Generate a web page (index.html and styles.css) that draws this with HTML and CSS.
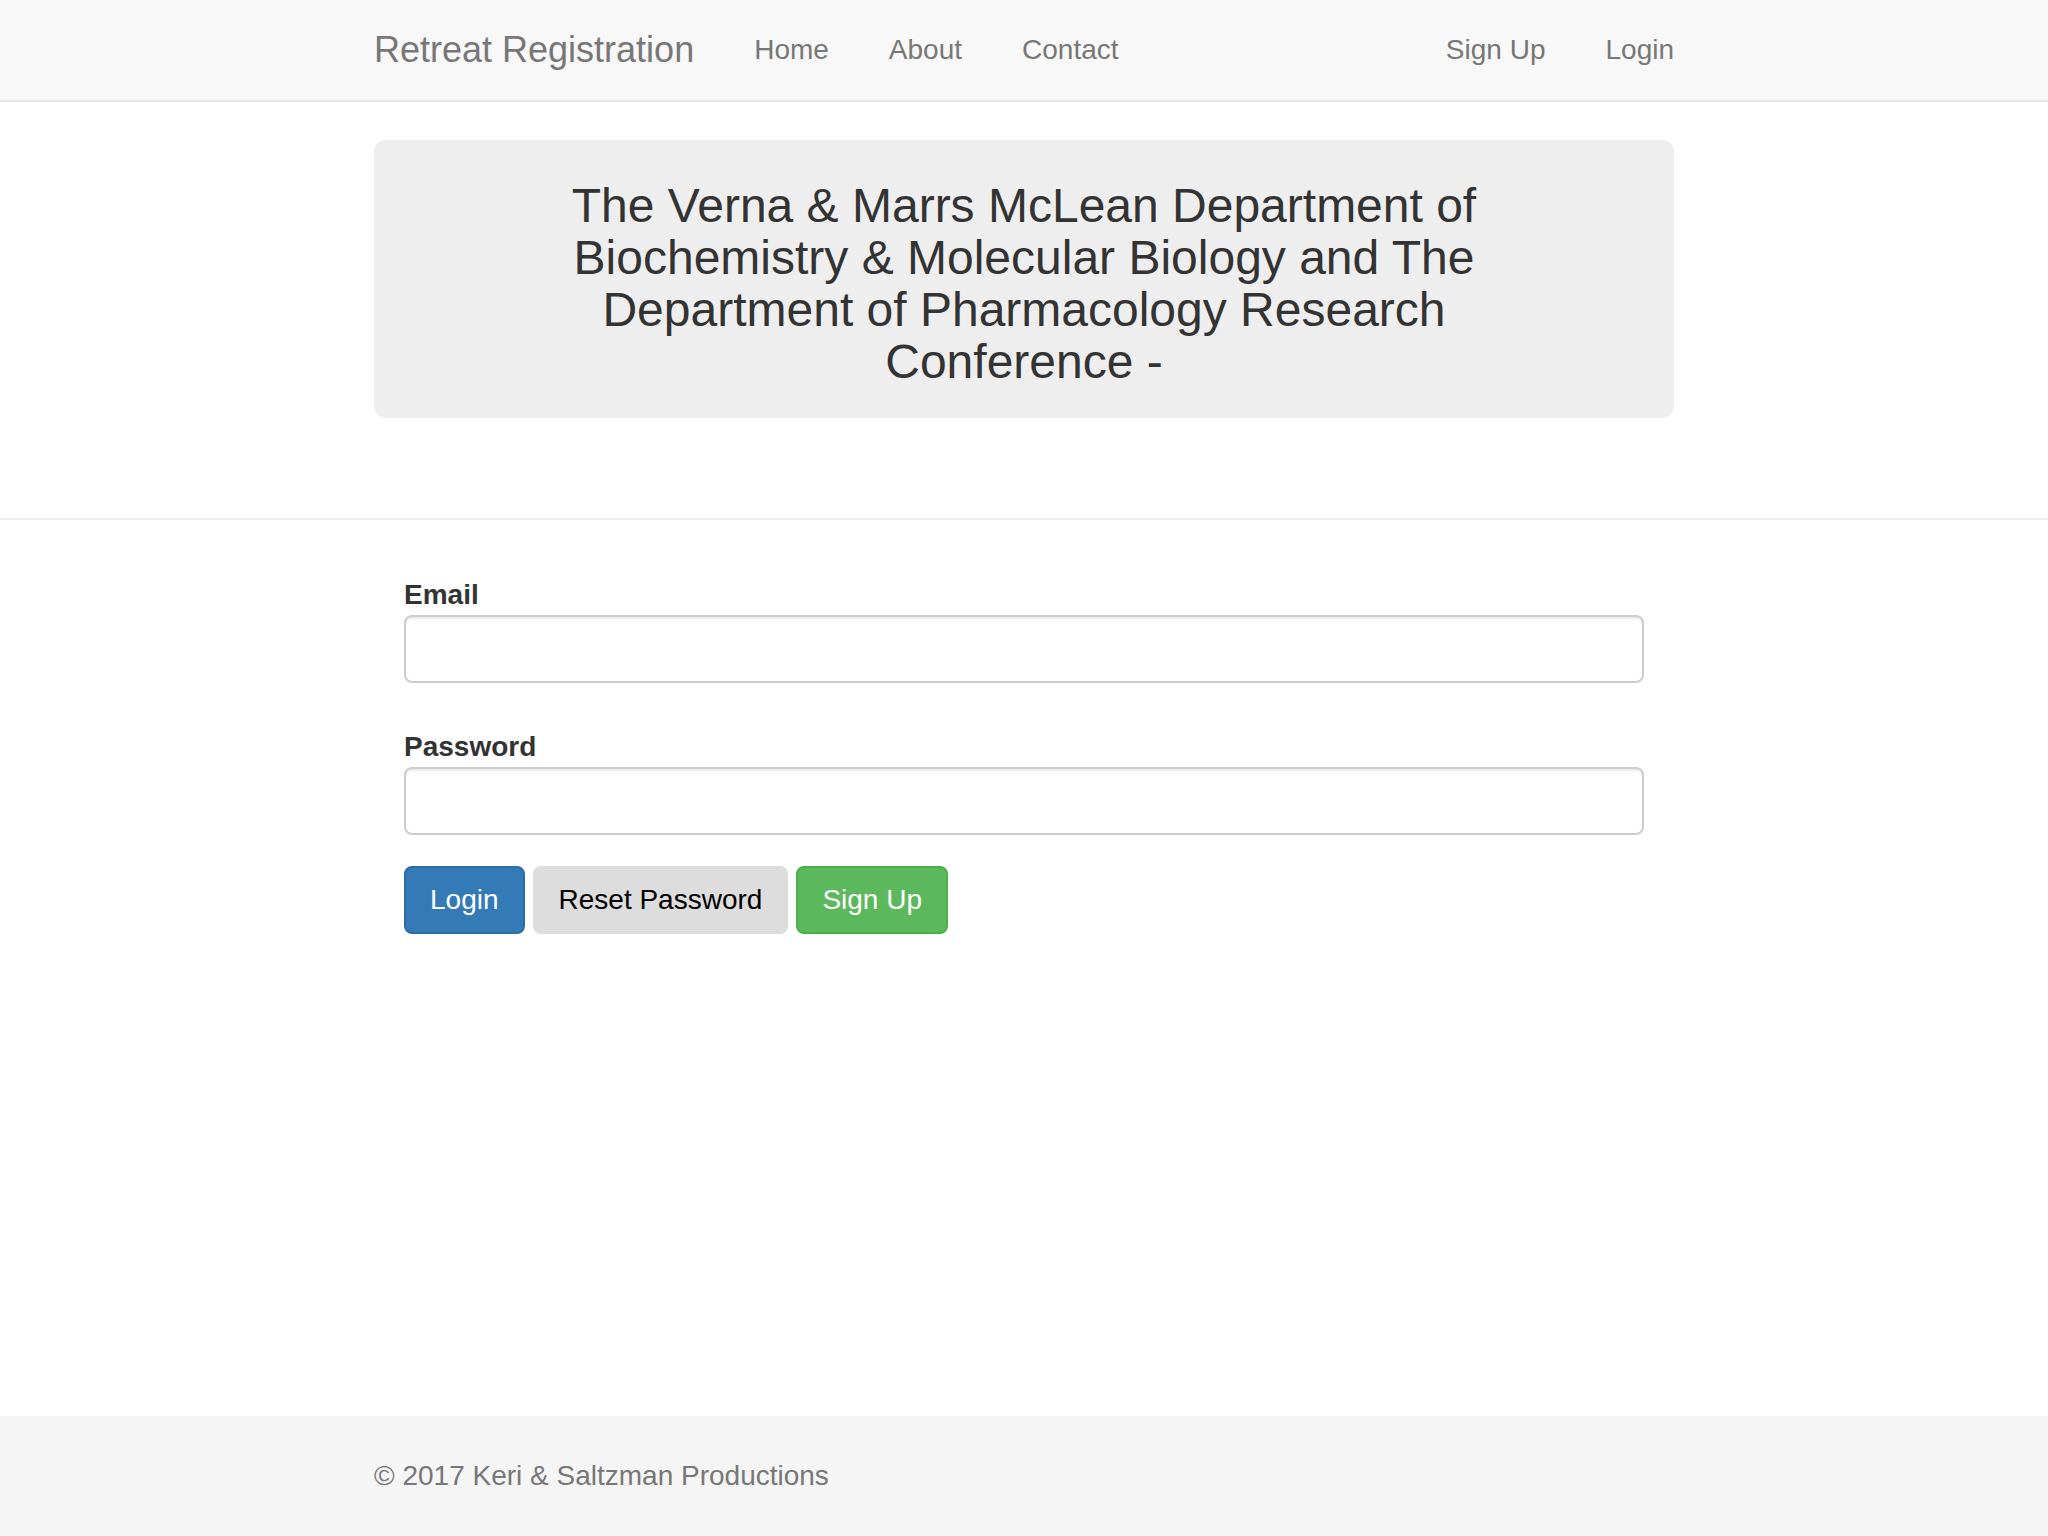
FILE: index.html
```html
<!DOCTYPE html>
<html lang="en">
<head>
<meta charset="utf-8">
<title>Retreat Registration</title>
<link rel="stylesheet" href="styles.css">
</head>
<body>
<header class="navbar">
  <div class="container nav-inner">
    <a class="brand" href="#">Retreat Registration</a>
    <nav class="nav-links">
      <a href="#">Home</a>
      <a href="#">About</a>
      <a href="#">Contact</a>
    </nav>
    <nav class="nav-links nav-right">
      <a href="#">Sign Up</a>
      <a href="#">Login</a>
    </nav>
  </div>
</header>
<main class="main">
  <div class="container">
    <div class="jumbotron">
      <h1>The Verna &amp; Marrs McLean Department of Biochemistry &amp; Molecular Biology and The Department of Pharmacology Research Conference -</h1>
    </div>
  </div>
  <hr class="divider">
  <div class="container">
    <form class="login-form">
      <div class="form-group">
        <label for="email">Email</label>
        <input id="email" type="email" class="form-control">
      </div>
      <div class="form-group form-group-last">
        <label for="password">Password</label>
        <input id="password" type="password" class="form-control">
      </div>
      <div class="actions">
        <button type="button" class="btn btn-primary">Login</button>
        <button type="button" class="btn btn-reset">Reset Password</button>
        <button type="button" class="btn btn-success">Sign Up</button>
      </div>
    </form>
  </div>
</main>
<footer class="footer">
  <div class="container">
    <p>&copy; 2017 Keri &amp; Saltzman Productions</p>
  </div>
</footer>
</body>
</html>
```

FILE: styles.css
```css
* {
  box-sizing: border-box;
}

html, body {
  margin: 0;
  padding: 0;
}

body {
  min-height: 100vh;
  display: flex;
  flex-direction: column;
  font-family: "Liberation Sans", Arial, Helvetica, sans-serif;
  font-size: 28px;
  line-height: 40px;
  color: #333;
  background: #fff;
}

a {
  text-decoration: none;
}

.container {
  width: 1300px;
  margin: 0 auto;
}

/* Navbar */
.navbar {
  background: #f8f8f8;
  border-bottom: 2px solid #e7e7e7;
}

.nav-inner {
  display: flex;
  align-items: stretch;
  height: 100px;
}

.brand {
  padding: 30px 30px 30px 0;
  font-size: 36px;
  line-height: 40px;
  color: #777;
}

.nav-links {
  display: flex;
}

.nav-links a {
  padding: 30px 30px;
  font-size: 28px;
  line-height: 40px;
  color: #777;
}

.nav-right {
  margin-left: auto;
}

.nav-right a:last-child {
  padding-right: 0;
}

/* Main */
.main {
  flex: 1;
}

.jumbotron {
  margin-top: 38px;
  padding: 40px 120px 30px;
  background: #eeeeee;
  border-radius: 12px;
}

.jumbotron h1 {
  margin: 0;
  font-size: 48px;
  line-height: 52px;
  font-weight: 500;
  text-align: center;
  color: #333;
}

.divider {
  margin: 100px 0 0;
  border: 0;
  border-top: 2px solid #eeeeee;
  height: 0;
}

.login-form {
  padding: 55px 30px 0;
}

.form-group {
  margin-bottom: 44px;
}

.form-group-last {
  margin-bottom: 31px;
}

.form-group label {
  display: block;
  font-weight: bold;
  font-size: 28px;
  line-height: 40px;
  color: #333;
}

.form-control {
  display: block;
  width: 100%;
  height: 68px;
  padding: 12px 24px;
  font: inherit;
  color: #555;
  background: #fff;
  border: 2px solid #ccc;
  border-radius: 8px;
  box-shadow: inset 0 2px 2px rgba(0, 0, 0, 0.075);
  outline: none;
}

.actions {
  display: flex;
  gap: 8px;
}

.btn {
  padding: 12px 24px;
  font-family: "Liberation Sans", Arial, Helvetica, sans-serif;
  font-size: 28px;
  line-height: 40px;
  border: 2px solid transparent;
  border-radius: 8px;
  cursor: pointer;
}

.btn-primary {
  color: #fff;
  background: #337ab7;
  border-color: #2e6da4;
}

.btn-reset {
  color: #000;
  background: #dddddd;
  border-color: #dddddd;
}

.btn-success {
  color: #fff;
  background: #5cb85c;
  border-color: #4cae4c;
}

/* Footer */
.footer {
  height: 120px;
  background: #f5f5f5;
}

.footer p {
  margin: 40px 0;
  font-size: 28px;
  line-height: 40px;
  color: #777;
}
```
